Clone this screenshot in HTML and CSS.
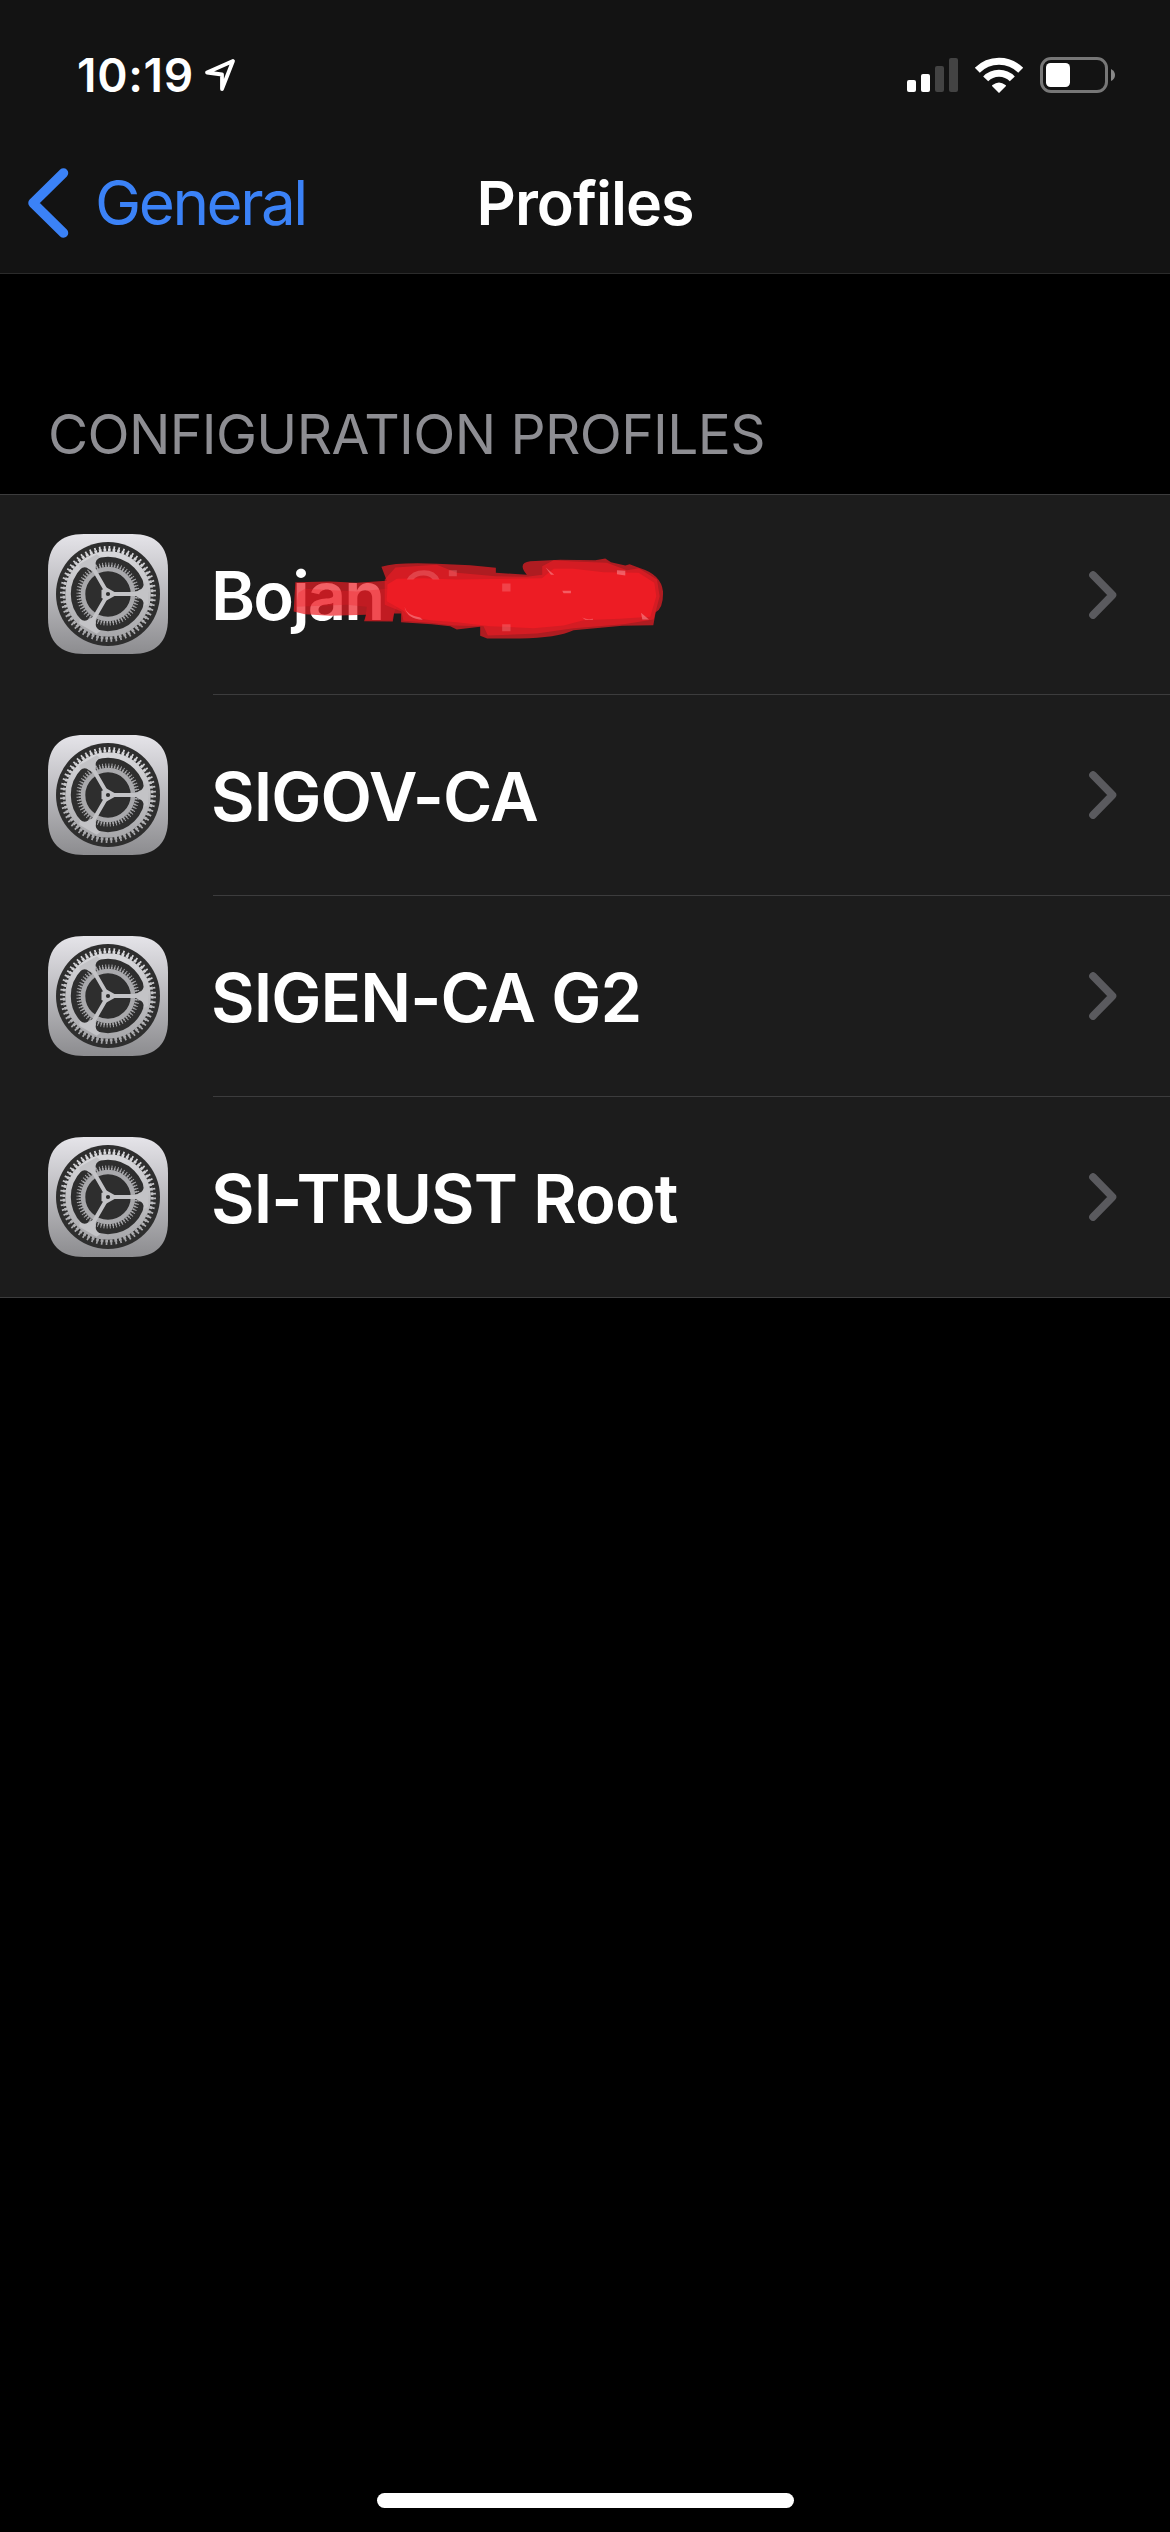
FILE: index.html
```html
<!DOCTYPE html>
<html lang="en">
<head>
    <meta charset="UTF-8">
    <meta name="viewport" content="width=device-width, initial-scale=1.0">
    <title>Profiles</title>
    <link rel="stylesheet" href="styles.css">
</head>
<body>

    <!-- shared icons -->
    <svg class="sprite" width="0" height="0">
        <defs>
            <linearGradient id="tile" x1="0" y1="0" x2="0" y2="1">
                <stop offset="0" stop-color="#e5e4e9"/>
                <stop offset="1" stop-color="#8c8c8f"/>
            </linearGradient>
            <linearGradient id="metal" gradientUnits="userSpaceOnUse" x1="0" y1="10" x2="0" y2="110">
                <stop offset="0" stop-color="#dddde0"/>
                <stop offset="1" stop-color="#a3a3a6"/>
            </linearGradient>
        </defs>
        <symbol id="gear" viewBox="0 0 120 120">
            <path d="M36 0H84C108 0 120 12 120 36V84C120 108 108 120 84 120H36C12 120 0 108 0 84V36C0 12 12 0 36 0Z" fill="url(#tile)"/>
            <circle cx="60" cy="60" r="52" fill="#2e2e2e"/>
            <g fill="none" stroke="#a9a9ac">
                <circle cx="60" cy="60" r="25" stroke-width="4.6"/>
                <circle cx="60" cy="60" r="28.3" stroke-width="2.6" pathLength="120" stroke-dasharray="1.1 0.9"/>
                <circle cx="60" cy="60" r="30.6" stroke-width="2" pathLength="120" stroke-dasharray="0.6 1.4" stroke-dashoffset="-0.25"/>
            </g>
            <g fill="none" stroke="url(#metal)">
                <circle cx="60" cy="60" r="40" stroke-width="5.6"/>
                <circle cx="60" cy="60" r="44" stroke-width="3" pathLength="120" stroke-dasharray="1.2 0.8"/>
                <circle cx="60" cy="60" r="46.6" stroke-width="2.8" pathLength="120" stroke-dasharray="0.7 1.3" stroke-dashoffset="-0.25"/>
            </g>
            <g fill="#c3c3c6">
                <path id="spoke" d="M60 58H88L91 56Q96.500 54.500 95.500 48L100 50V70L95.500 72Q96.500 65.500 91 64L88 62H60Z"/>
                <use href="#spoke" transform="rotate(120 60 60)"/>
                <use href="#spoke" transform="rotate(240 60 60)"/>
                <path d="M66.500 58L58.500 53.500L53.500 56V64L58.500 66.500L66.500 62Z"/>
            </g>
            <circle cx="60" cy="60" r="2.100" fill="#2e2e2e"/>
        </symbol>
        <symbol id="chevron" viewBox="0 0 28 48">
            <path d="M4 4L23.500 24L4 44" fill="none" stroke="#5a5a5e" stroke-width="7.600" stroke-linecap="round" stroke-linejoin="round"/>
        </symbol>
    </svg>

    <header class="top">
        <div class="status-bar">
            <span class="time">10:19</span>
            <svg class="location" width="32" height="34" viewBox="0 0 32 34">
                <path d="M29 3L3 14.500L18 16.500V31Z" fill="none" stroke="#fff" stroke-width="3.800" stroke-linejoin="round"/>
            </svg>
            <div class="indicators">
                <svg width="51" height="34" viewBox="0 0 51 34">
                    <rect x="0" y="22" width="9" height="12" rx="2" fill="#fff"/>
                    <rect x="14" y="16" width="9" height="18" rx="2" fill="#fff"/>
                    <rect x="28" y="8" width="9" height="26" rx="2" fill="#434343"/>
                    <rect x="42" y="0" width="9" height="34" rx="2" fill="#434343"/>
                </svg>
                <svg class="wifi" width="50" height="36" viewBox="0 0 50 36">
                    <g fill="none" stroke="#fff" stroke-width="7">
                        <path d="M3.300 13.300A30.500 30.500 0 0 1 46.700 13.300"/>
                        <path d="M11.700 21.900A18.500 18.500 0 0 1 38.300 21.900"/>
                    </g>
                    <path d="M25 36L18 29Q17.800 28.500 18.500 28Q25 23 31.500 28Q32.200 28.500 32 29Z" fill="#fff"/>
                </svg>
                <svg class="battery" width="76" height="36" viewBox="0 0 76 36">
                    <rect x="1.500" y="1.500" width="65" height="33" rx="9.500" fill="none" stroke="#777" stroke-width="3"/>
                    <rect x="6" y="6" width="24" height="24" rx="4.500" fill="#fff"/>
                    <path d="M71 12Q75 14 75 18Q75 22 71 24Z" fill="#888"/>
                </svg>
            </div>
        </div>
        <nav class="nav-bar">
            <a class="back">
                <svg width="42" height="72" viewBox="0 0 42 72">
                    <path d="M36.500 6L6 36L36.500 66" fill="none" stroke="#3b82f7" stroke-width="9.500" stroke-linecap="round" stroke-linejoin="round"/>
                </svg>
                <span class="back-label">General</span>
            </a>
            <h1 class="title">Profiles</h1>
        </nav>
    </header>

    <main>
        <h2 class="section-title">CONFIGURATION PROFILES</h2>
        <ul class="profiles">
            <li class="profile">
                <svg class="icon"><use href="#gear"/></svg>
                <div class="cell">
                    <span class="name redacted">Bojan
                        <svg class="scribble" viewBox="300 80 1130 260">
                            <g fill="#ed1c24">
                                <path fill-opacity=".7" d="M316 158L420 156L500 160L590 154L574 112Q620 98 740 103L840 107L917 115V130L1010 136Q980 100 1020 95L1110 91L1215 92L1245 87L1262 98L1305 108L1318 104L1350 116Q1412 135 1418 185Q1420 235 1396 248L1389 287L1296 289L1150 302Q1100 325 990 327H891L870 319V292L800 300L780 290L725 284L633 278V252H612L608 276L522 275L528 256L420 259L345 254L311 246Z"/>
                                <path fill-opacity=".3" d="M325 190L345 178L500 186L590 178L640 190L612 250L606 272L525 272L530 232L470 226L318 232Z"/>
                                <path fill-opacity=".6" d="M584 150L616 114L740 106L800 130L917 140L1010 142L1056 136V110L1090 92L1150 96L1250 100L1310 122L1345 116L1400 150L1408 200L1390 270L1300 284L1150 296L1040 312L893 318L880 290L790 288L720 280L640 274L634 246L584 226Z"/>
                                <path d="M592 165L620 148L700 146L800 150L1055 146L1090 118L1150 118L1240 128L1345 130L1392 160L1398 200L1380 262L1290 268L1180 272L1120 288L1030 296L900 290L800 278L720 272L660 262L640 244L590 215Z"/>
                            </g>
                            <g fill="#f8898e" fill-opacity=".6">
                                <path d="M1066 114L1092 136H1082ZM1280 122L1305 124V138L1280 134ZM1116 184H1142V191H1120ZM1352 250L1376 270H1356ZM1176 264Q1190 272 1208 268V271H1185Z"/>
                                <path d="M643 232Q650 258 690 264L698 271Q652 270 643 232Z"/>
                                <path fill-opacity=".35" d="M650 150Q665 122 702 122Q736 122 748 150H728Q718 138 700 138Q680 138 670 150ZM776 122H800V140H776ZM936 162H961V186H936ZM936 284H961V305H936Z"/>
                            </g>
                        </svg>
                    </span>
                    <svg class="chevron"><use href="#chevron"/></svg>
                </div>
            </li>
            <li class="profile">
                <svg class="icon"><use href="#gear"/></svg>
                <div class="cell">
                    <span class="name">SIGOV-CA</span>
                    <svg class="chevron"><use href="#chevron"/></svg>
                </div>
            </li>
            <li class="profile">
                <svg class="icon"><use href="#gear"/></svg>
                <div class="cell">
                    <span class="name">SIGEN-CA G2</span>
                    <svg class="chevron"><use href="#chevron"/></svg>
                </div>
            </li>
            <li class="profile">
                <svg class="icon"><use href="#gear"/></svg>
                <div class="cell">
                    <span class="name">SI-TRUST Root</span>
                    <svg class="chevron"><use href="#chevron"/></svg>
                </div>
            </li>
        </ul>
    </main>

    <div class="home-indicator"></div>

</body>
</html>
```
FILE: styles.css
```css
* {
    box-sizing: border-box;
}

body {
    margin: 0;
    height: 2532px;
    display: flex;
    flex-direction: column;
    background-color: #000;
    color: #fff;
    font-family: Inter, "Liberation Sans", sans-serif;
}

svg {
    display: block;
    flex-shrink: 0;
}

.sprite {
    position: absolute;
}

.top {
    height: 274px;
    background-color: #131313;
    border-bottom: 1px solid #2b2b2b;
}

.status-bar {
    display: flex;
    align-items: center;
    height: 132px;
    padding: 17px 54px 0 77px;
}

.time {
    font-size: 46px;
    font-weight: 600;
    line-height: 1;
    letter-spacing: 0.7px;
}

.location {
    margin-left: 10px;
}

.indicators {
    display: flex;
    align-items: center;
    margin-left: auto;
}

.wifi {
    margin-left: 16px;
}

.battery {
    margin-left: 16px;
}

.nav-bar {
    display: grid;
    grid-template-columns: 1fr auto 1fr;
    align-items: center;
    height: 141px;
    padding: 0 27px;
}

.back {
    display: flex;
    align-items: center;
    color: #3b82f7;
}

.back-label {
    margin-left: 26px;
    font-size: 62px;
    line-height: 1;
    letter-spacing: -2.5px;
}

.title {
    margin: 0;
    padding-top: 1px;
    font-size: 61px;
    font-weight: 600;
    line-height: 1;
    letter-spacing: -1px;
}

.section-title {
    margin: 0;
    height: 220px;
    padding: 132px 0 0 48px;
    font-size: 55px;
    font-weight: 400;
    line-height: 56px;
    letter-spacing: -0.6px;
    color: #8d8d92;
}

.profiles {
    margin: 0;
    padding: 0;
    list-style: none;
    background-color: #1c1c1c;
    border-top: 1px solid #3c3c3d;
    border-bottom: 1px solid #3c3c3d;
}

.profile {
    display: flex;
    align-items: center;
    height: 201px;
    padding-left: 48px;
}

.profile:first-child,
.profile:last-child {
    height: 200px;
}

.icon {
    width: 120px;
    height: 120px;
    margin-bottom: 1px;
}

.profile:first-child .icon {
    margin-bottom: 2px;
}

.cell {
    display: flex;
    align-items: center;
    justify-content: space-between;
    flex: 1;
    height: 100%;
    margin-left: 45px;
    padding-right: 53px;
    border-bottom: 1px solid #3c3c3d;
}

.profile:last-child .cell {
    border-bottom: none;
}

.name {
    position: relative;
    margin-left: -2px;
    padding-top: 2px;
    font-size: 67px;
    font-weight: 600;
    line-height: 1;
    letter-spacing: -0.9px;
}

.redacted {
    letter-spacing: -1.9px;
}

/* red marker drawn over the name */
.scribble {
    position: absolute;
    left: 79px;
    top: -4px;
    width: 377px;
    height: 87px;
}

.chevron {
    width: 28px;
    height: 48px;
}

.home-indicator {
    width: 417px;
    height: 15px;
    margin: auto auto 24px;
    border-radius: 8px;
    background-color: #fff;
}
```
